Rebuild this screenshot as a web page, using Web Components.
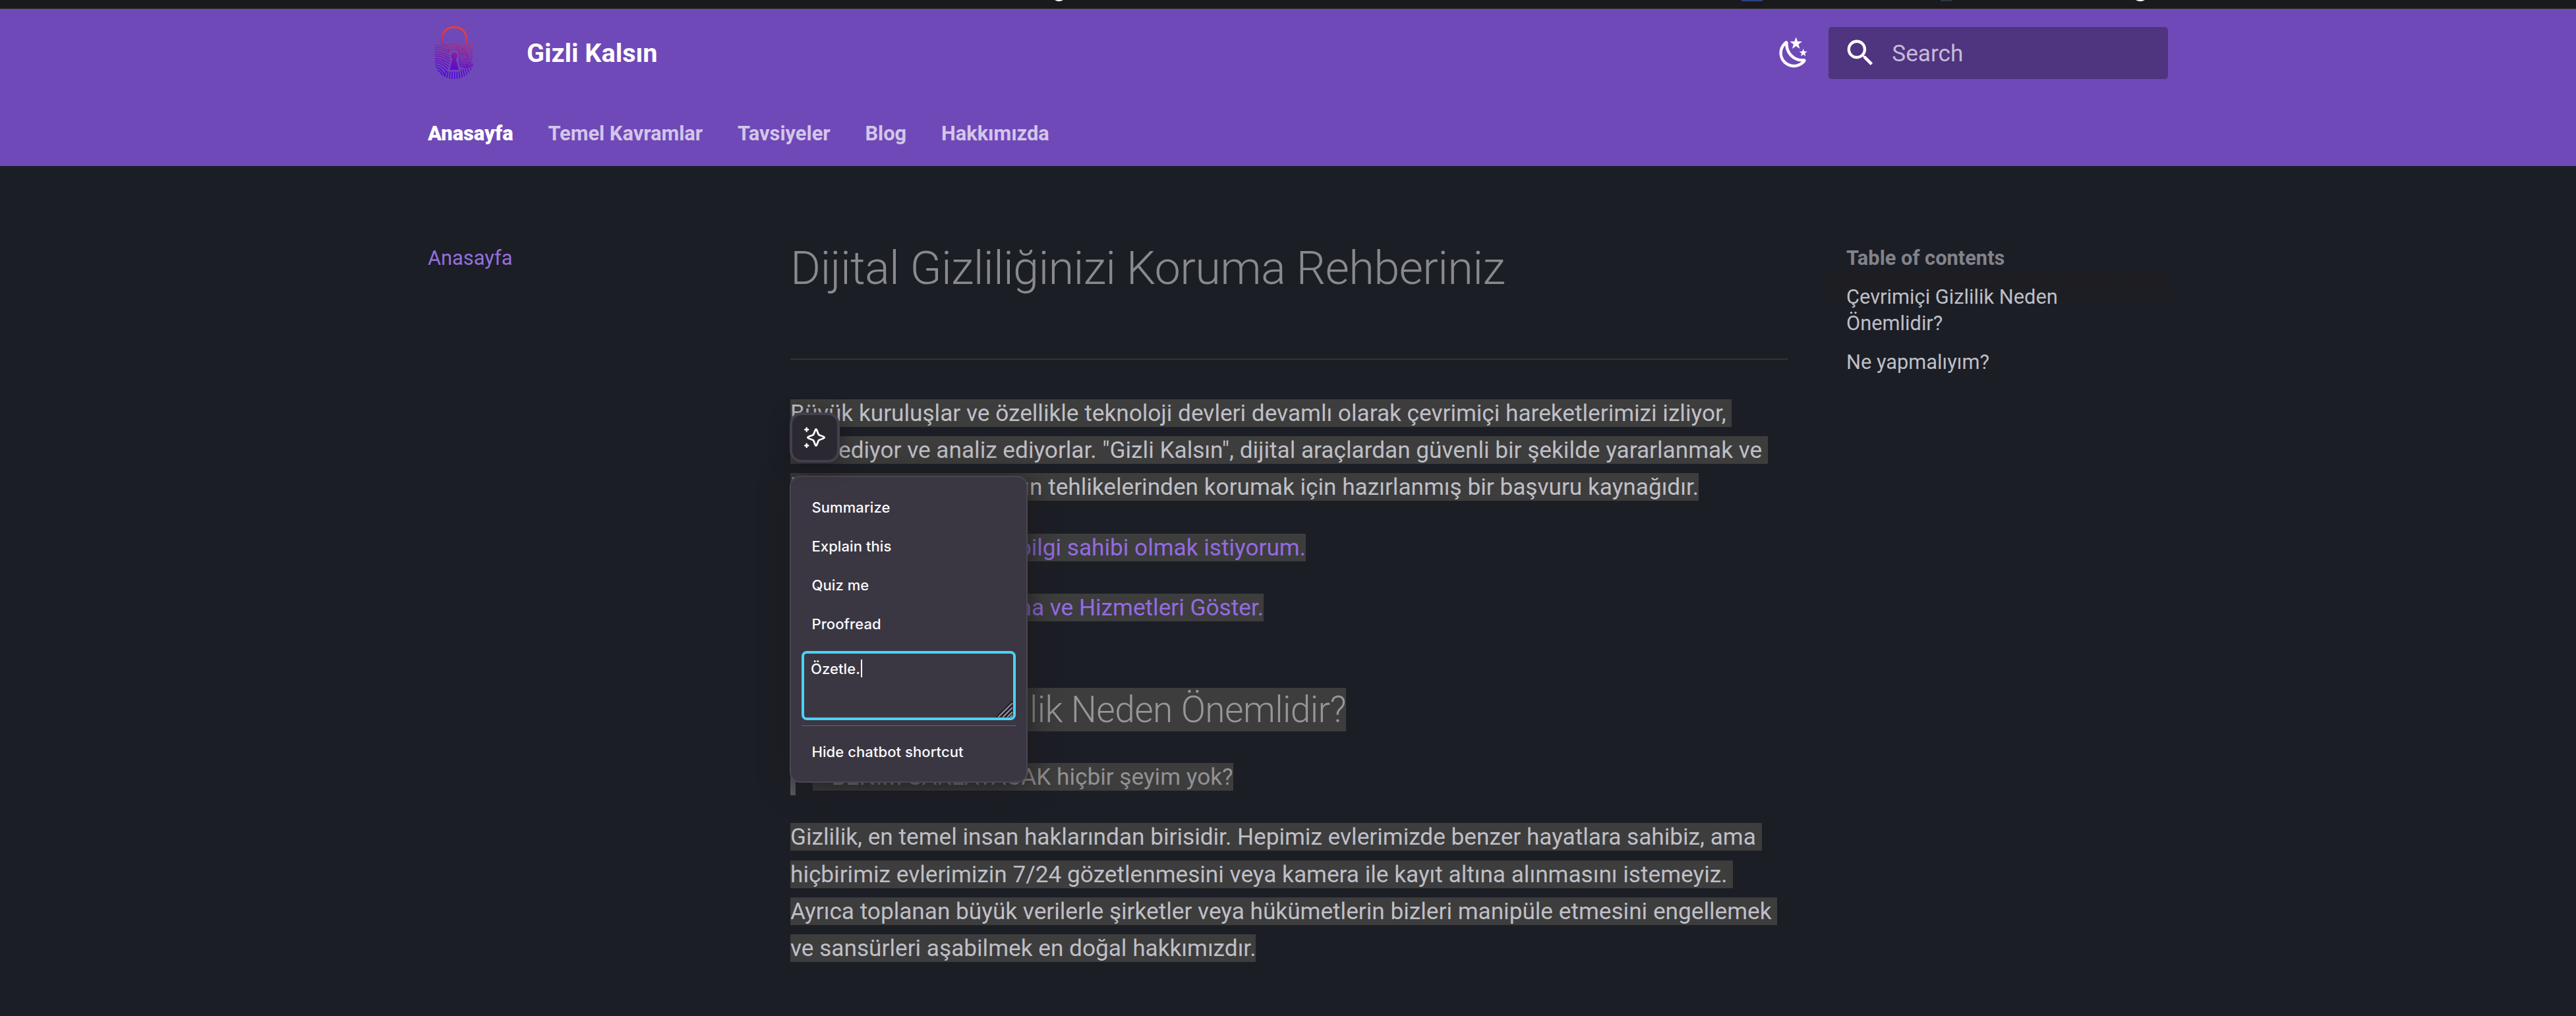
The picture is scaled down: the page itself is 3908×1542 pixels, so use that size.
<!DOCTYPE html>
<html lang="tr">
<head>
<meta charset="utf-8">
<title>Gizli Kalsın</title>
<style>
html,body{margin:0;padding:0}
body{width:3908px;height:1542px;overflow:hidden;background:#1c1e26;font-family:Roboto,sans-serif;color:#bfbfc6}
</style>
</head>
<body>
<gk-page></gk-page>
<script>
const define=(name,html)=>{
  const t=document.createElement('template');t.innerHTML=html;
  customElements.define(name,class extends HTMLElement{
    constructor(){super();this.attachShadow({mode:'open'}).appendChild(t.content.cloneNode(true));}
  });
};

/* bottom edge of the browser toolbar */
define('gk-toolbar',`<style>
:host{display:block;height:14px;box-sizing:border-box;background:#1a191e;border-bottom:1px solid #4c4a50}
svg{display:block}
</style><svg width="3908" height="13" viewBox="0 0 3908 13">
<path d="M1600 0q6.500 4 13 0z" fill="#fff"/><rect x="2642" width="32" height="2" fill="#2c437c"/>
<rect x="2944" width="17" height="2" fill="#263845"/><path d="M3240 0q7 4 14 0z" fill="#fff"/></svg>`);

define('gk-logo',`<style>:host{display:block;width:110px;height:110px}svg{display:block}</style>
<svg width="110" height="110" viewBox="0 0 330 330" fill="none">
<defs>
<linearGradient id="g" gradientUnits="userSpaceOnUse" x1="175" y1="60" x2="125" y2="290"><stop offset="0" stop-color="#ec4036"/><stop offset=".2" stop-color="#d33b52"/><stop offset=".42" stop-color="#9b2a8c"/><stop offset=".7" stop-color="#6c12b8"/><stop offset="1" stop-color="#4a00e8"/></linearGradient>
<clipPath id="c"><path d="M58 138H237V215C237 268 190 300 147 300C104 300 58 268 58 215Z"/></clipPath>
<mask id="m" maskUnits="userSpaceOnUse" x="0" y="0" width="330" height="330"><rect width="330" height="330" fill="#fff"/><path d="M147 174a22 22 0 0 1 14 38L175 264H119L133 212A22 22 0 0 1 147 174Z" fill="#000"/></mask>
</defs>
<path d="M92 137V117C92 84 116 64 147.500 64S203 84 203 117V137" stroke="url(#g)" stroke-width="9"/>
<g clip-path="url(#c)"><g mask="url(#m)" stroke="url(#g)" stroke-width="4.600" stroke-linecap="round">
<path d="M60 146H90C103 146 110 152 119 156M60 156H88C104 157 112 165 124 171M60 166H86C104 167 113 176 124 181M60 176H83C103 178 112 189 126 195M60 186H81C101 188 112 200 130 208M60 196H78C100 198 112 211 130 220M60 206H76C99 209 111 223 127 232M60 216H74C98 219 109 234 122 243M60 226H71C96 229 107 246 118 255M60 236H68C92 240 103 256 114 268M62 246C88 250 101 270 106 292M66 257C84 262 93 276 96 291M72 268C80 272 84 278 86 285"/>
<path d="M100 142L118 147M121 176C119 160 128 150 137 152C150 155 146 164 158 170M130 172C131 162 136 160 139 166M126 142C143 136 152 145 157 156C167 177 184 185 191 205C193 209 204 209 208 204C216 192 190 176 183 160M144 141C160 143 163 153 169 164C178 179 196 190 197 197M162 141C174 144 175 158 185 169C196 181 207 191 203 198M178 141C183 151 189 162 198 171C212 184 220 195 216 205C209 219 189 221 181 208C175 196 165 187 168 179M190 141C194 154 204 165 213 171C229 184 231 199 225 211C214 229 184 231 174 214C169 206 166 201 165 194M203 142C208 153 217 161 230 168M215 140C218 148 224 153 233 156M229 141L231 143M206 160C210 150 218 158 229 176M168 218C178 237 207 240 226 224M170 231C187 245 210 244 231 232M171 241C188 249 211 250 232 240"/>
<path d="M109 266L101 297M119 268L113 298M129 268L125 299M139 268L137 300M149 268V300M159 268L161 300M169 267L173 299M178 258L185 297M187 255L196 292M197 253L207 286M208 252L218 278M220 250L228 265"/>
</g>
<circle cx="147" cy="194" r="15" fill="url(#g)"/><path d="M140 204H154L168 258H127Z" fill="url(#g)"/></g></svg>`);

define('gk-search',`<style>
:host{display:flex;align-items:center;width:514.800px;height:79px;box-sizing:border-box;margin-top:1px;padding-left:21.500px;gap:22px;border-radius:5px;background:#4f3480;color:#c5bbd6;font-size:35.200px;line-height:52px}
svg{display:block;fill:#fff;margin-top:-1px}
</style><svg width="52.8" height="52.8" viewBox="0 0 24 24"><path d="M9.500 3A6.500 6.500 0 0 1 16 9.500c0 1.610-.59 3.090-1.560 4.230l.27.270h.79l5 5-1.500 1.500-5-5v-.790l-.27-.270A6.520 6.520 0 0 1 9.500 16 6.500 6.500 0 0 1 3 9.500 6.500 6.500 0 0 1 9.500 3m0 2C7 5 5 7 5 9.500S7 14 9.500 14 14 12 14 9.500 12 5 9.500 5"/></svg><span>Search</span>`);

define('gk-header',`<style>
:host{display:block;height:238px;background:#6f49b7;color:#fff}
.bar{display:flex;align-items:center;width:2648.800px;height:132px;margin-left:640px}
.bar gk-logo{margin-top:-10px}
.title{flex:1;margin-left:49px;padding-top:2px;font-size:39.600px;font-weight:700;line-height:60px}
.moon{display:block;fill:#fff;margin-right:26.500px}
nav{display:flex;gap:52.800px;margin-left:649px;padding-top:37px;font-size:30.800px;font-weight:700;line-height:40px;color:#d3c6ea}
nav b{color:#fff}
</style>
<div class="bar"><gk-logo></gk-logo><div class="title">Gizli Kalsın</div>
<svg class="moon" width="52.800" height="52.800" viewBox="0 0 24 24"><path d="m17.750 4.090-2.530 1.940.91 3.060-2.630-1.810-2.630 1.810.91-3.060-2.530-1.940L12.440 4l1.060-3 1.060 3zm3.500 6.910-1.640 1.250.59 1.980-1.700-1.170-1.700 1.170.59-1.980L15.750 11l2.060-.05L18.500 9l.69 1.950zm-2.280 4.950c.83-.08 1.720 1.100 1.190 1.850-.32.450-.66.870-1.080 1.270C15.170 23 8.840 23 4.940 19.070c-3.910-3.900-3.910-10.240 0-14.140.4-.4.820-.760 1.270-1.080.75-.530 1.930.360 1.850 1.190-.27 2.860.69 5.830 2.890 8.020a9.960 9.960 0 0 0 8.020 2.890m-1.640 2.020a12.080 12.080 0 0 1-7.800-3.470c-2.170-2.190-3.330-5-3.490-7.820-2.810 3.140-2.700 7.960.31 10.980 3.020 3.010 7.840 3.120 10.980.31"/></svg>
<gk-search></gk-search></div>
<nav><b>Anasayfa</b><span>Temel Kavramlar</span><span>Tavsiyeler</span><span>Blog</span><span>Hakkımızda</span></nav>`);

define('gk-sidebar',`<style>
:host{display:block;width:550px;padding-top:119.500px;font-size:30.800px;line-height:40px;color:#9470dc}
</style><slot></slot>`);

define('gk-toc',`<style>
:host{display:block;width:497px;padding-top:119.500px;font-size:30.800px;line-height:40px}
.t{font-weight:700;color:#82838a}
.a{margin-top:19.250px}.shade{height:46px;margin:0 0 -46px -28px;width:518px;background:linear-gradient(#1e1e22,#1c1e25)}
.a{position:relative}
</style><div class="t">Table of contents</div><div class="shade"></div>
<div class="a">Çevrimiçi Gizlilik Neden<br>Önemlidir?</div><div class="a">Ne yapmalıyım?</div>`);

/* one selected line of text; --w fixes the width and aligns the text to its end */
define('gk-line',`<style>
:host{display:flex;align-items:center;height:var(--lh,56.320px);white-space:pre}
span{display:block;box-sizing:border-box;width:var(--w,auto);text-align:right;line-height:var(--h,42px);height:var(--h,42px);background:#3d3d3d}
</style><span><slot></slot></span>`);

define('gk-article',`<style>
:host{display:block;width:1513px;padding-top:110px;font-size:35.200px;color:#bfbfc6}
h1{margin:0;height:91.500px;font-size:70.400px;line-height:91.500px;font-weight:300;letter-spacing:-.01em;color:#898a8e;white-space:nowrap}
hr{margin:90.500px 0 52.700px;border:0;height:2px;background:#323437}
p,blockquote,h2{margin:0 0 35.200px}
p.l{color:#946be0}
h2{margin:88px 0 35.200px;font-size:55px;font-weight:300;letter-spacing:-.01em;color:#969698;--h:66px;--lh:77px}
blockquote{border-left:8.800px solid #5d5e62;padding-left:25.700px;color:#919193}
</style>
<h1>Dijital Gizliliğinizi Koruma Rehberiniz</h1><hr>
<p><gk-line>Büyük kuruluşlar ve özellikle teknoloji devleri devamlı olarak çevrimiçi hareketlerimizi izliyor, </gk-line><gk-line>kaydediyor ve analiz ediyorlar. "Gizli Kalsın", dijital araçlardan güvenli bir şekilde yararlanmak ve </gk-line><gk-line style="--w:1378px">kendinizi dijital dünyanın tehlikelerinden korumak için hazırlanmış bir başvuru kaynağıdır.</gk-line></p>
<p class="l"><gk-line style="--w:782px">bilgi sahibi olmak istiyorum.</gk-line></p>
<p class="l"><gk-line style="--w:718px">ma ve Hizmetleri Göster.</gk-line></p>
<h2><gk-line style="--w:843px">Çevrimiçi Gizlilik Neden Önemlidir?</gk-line></h2>
<blockquote><gk-line style="--w:638px">- BENİM SAKLAYACAK hiçbir şeyim yok?</gk-line></blockquote>
<p><gk-line>Gizlilik, en temel insan haklarından birisidir. Hepimiz evlerimizde benzer hayatlara sahibiz, ama </gk-line><gk-line>hiçbirimiz evlerimizin 7/24 gözetlenmesini veya kamera ile kayıt altına alınmasını istemeyiz. </gk-line><gk-line>Ayrıca toplanan büyük verilerle şirketler veya hükümetlerin bizleri manipüle etmesini engellemek </gk-line><gk-line>ve sansürleri aşabilmek en doğal hakkımızdır.</gk-line></p>`);

define('gk-spark',`<style>
:host{display:flex;align-items:center;justify-content:center;box-sizing:border-box;width:76px;height:76px;border:4px solid #42404c;border-radius:18px;background:#2a2931;box-shadow:0 4px 28px rgba(20,20,20,.55)}
</style><svg width="68" height="68" viewBox="0 0 68 68" fill="none" stroke="#fbfbfe" stroke-width="2.800" stroke-linejoin="round" stroke-linecap="round">
<path d="M36 21.500C37.500 21.500 38.300 27.300 40.200 29.800C42.700 31.700 48.700 32.300 48.700 34C48.700 35.700 42.700 36.300 40.200 38.200C38.300 40.700 37.500 46.500 36 46.500C34.500 46.500 33.700 40.700 31.800 38.200C29.300 36.300 23.300 35.700 23.300 34C23.300 32.300 29.300 31.700 31.800 29.800C33.700 27.300 34.500 21.500 36 21.500Z"/>
<path d="M21.700 19.500V24.500M19.200 22H24.200M21.700 43.800V48.800M19.200 46.300H24.200" stroke-width="2.500"/></svg>`);

define('gk-menu',`<style>
:host{display:flex;flex-direction:column;box-sizing:border-box;width:361px;height:466px;padding:16px;border:2px solid #484652;border-radius:16px;background:#3a3742;color:#fbfbfe;font:450 22px/61px Inter,sans-serif;letter-spacing:.08px;box-shadow:0 4px 44px rgba(28,28,28,.95)}
.i{height:59px;padding-left:15.500px}
.box{display:flex;flex-direction:column;box-sizing:border-box;height:105px;border:4px solid #4cd2fa;border-radius:8px;margin:12px 0 8px;padding:9px 0 0 10px;line-height:28px}
.in{display:flex;height:70px}.in i{width:2px;height:27px;background:#fff;margin-left:1px}
svg{display:block;align-self:flex-end;margin-top:-6px}
.sep{height:2px;background:#66646f}
</style>
<div class="i">Summarize</div><div class="i">Explain this</div><div class="i">Quiz me</div><div class="i">Proofread</div>
<div class="box"><div class="in"><span>Özetle.</span><i></i></div>
<svg width="26" height="26" viewBox="0 0 26 26" stroke-width="1.600"><path d="M1 25L25 1M8 25L25 8M15 25L25 15" stroke="#1d1c22" stroke-width="3"/><path d="M3 25L25 3M10 25L25 10M17 25L25 17M22 25L25 22" stroke="#aaa8b2"/></svg></div>
<div class="sep"></div><div class="i" style="margin-top:9px">Hide chatbot shortcut</div>`);

define('gk-page',`<style>
:host{display:block;position:relative;width:3908px;height:1542px}
main{display:flex;margin-left:649px}
gk-toc{margin-left:89px}
gk-spark{position:absolute;left:1198px;top:626px}
gk-menu{position:absolute;left:1198px;top:722px}
</style>
<gk-toolbar></gk-toolbar><gk-header></gk-header>
<main><gk-sidebar>Anasayfa</gk-sidebar><gk-article></gk-article><gk-toc></gk-toc></main>
<gk-menu></gk-menu><gk-spark></gk-spark>`);
</script>
</body>
</html>
